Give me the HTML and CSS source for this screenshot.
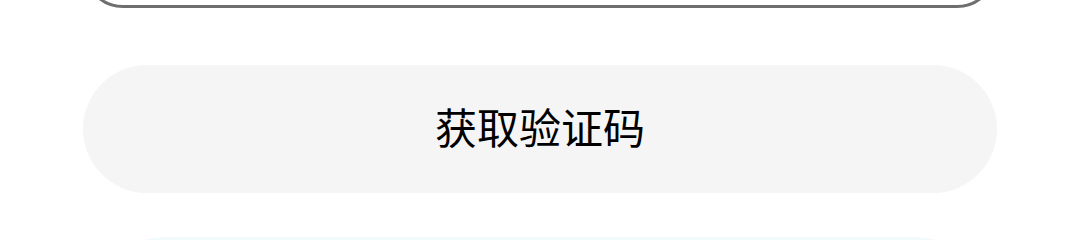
FILE: index.html
```html
<!DOCTYPE html>
<html lang="zh">
<head>
<meta charset="utf-8">
<link rel="stylesheet" href="styles.css">
</head>
<body>
<div class="page">
  <div class="input-box"></div>
  <button class="code-btn">获取验证码</button>
  <div class="next-btn"></div>
</div>
</body>
</html>
```
FILE: styles.css
```css
html, body {
  margin: 0;
  padding: 0;
  background: #ffffff;
  overflow: hidden;
}
.page {
  width: 1080px;
  height: 240px;
  overflow: hidden;
  display: flex;
  flex-direction: column;
  align-items: center;
}
.input-box {
  box-sizing: border-box;
  width: 914px;
  height: 80px;
  margin-top: -72px;
  border: 3px solid #6e6e6e;
  border-radius: 40px;
  flex-shrink: 0;
}
.code-btn {
  box-sizing: border-box;
  width: 914px;
  height: 128px;
  margin-top: 57px;
  border: none;
  border-radius: 64px;
  background: #f5f5f5;
  color: #000000;
  font-family: "Noto Sans CJK SC", sans-serif;
  font-size: 42px;
  font-weight: 400;
  display: flex;
  align-items: center;
  justify-content: center;
  padding: 0 0 7px 0;
  flex-shrink: 0;
}
.next-btn {
  width: 880px;
  height: 128px;
  margin-top: 44px;
  border-radius: 64px;
  background: #f1fbfb;
  flex-shrink: 0;
}
```
